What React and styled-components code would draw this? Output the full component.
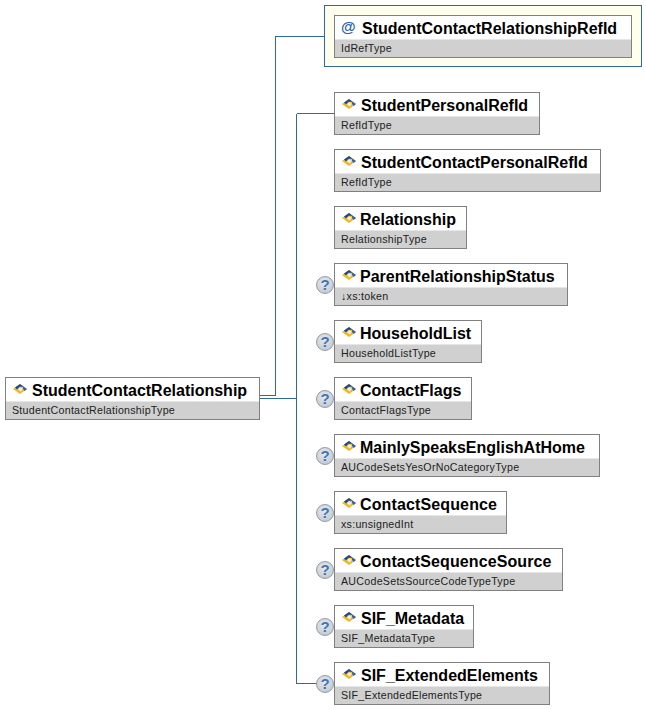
import React from "react";
import styled, { createGlobalStyle } from "styled-components";

const Global = createGlobalStyle`
  html, body { margin: 0; padding: 0; background: #fff; }
  body { font-family: "Liberation Sans", Arial, sans-serif; }
`;

const Diagram = styled.div`
  position: relative;
  width: 646px;
  height: 709px;
  overflow: hidden;
  display: flex;
  align-items: flex-start;
  box-sizing: border-box;
  padding: 5px 0 0 5px;
`;

const Root = styled.div`
  margin-top: 372px;
  width: 319px;
  flex: none;
`;

const Schema = styled.div`
  display: flex;
  flex-direction: column;
  align-items: flex-start;
  gap: 14px;
`;

const AttributeGroup = styled.div`
  box-sizing: border-box;
  width: 318px;
  height: 62px;
  margin-bottom: 11px;
  padding: 9px;
  background: #ffffee;
  border: 1px solid #31699b;
`;

const Elements = styled.div`
  display: flex;
  flex-direction: column;
  align-items: flex-start;
  gap: 14px;
  margin-left: 10px;
`;

const Node = styled.div`
  position: relative;
  box-sizing: border-box;
  height: 43px;
  width: ${(p) => p.$w}px;
  background: #fff;
  border: 1px solid #808080;
  display: flex;
  flex-direction: column;
`;

const Head = styled.div`
  height: 23px;
  flex: none;
  display: flex;
  align-items: center;
  padding: 3px 0 0 7px;
  gap: ${(p) => p.$gap}px;
  box-sizing: border-box;
`;

const Name = styled.span`
  font-size: 16px;
  font-weight: 700;
  color: #000;
  white-space: nowrap;
  line-height: 20px;
  letter-spacing: ${(p) => p.$track || 0}px;
`;

const Type = styled.div`
  flex: 1;
  background: #d0d0d0;
  border-top: 1px solid #e6e6e6;
  font-size: 10.67px;
  letter-spacing: 0.26px;
  line-height: 17px;
  padding-left: 6px;
  color: #222;
  white-space: nowrap;
`;

const At = styled.span`
  font-size: 15px;
  line-height: 20px;
  color: #2b62a8;
  font-weight: 700;
  width: 15px;
  margin: -5px 0 0 -1px;
`;

const Optional = styled.span`
  position: absolute;
  left: -19px;
  top: 12px;
  box-sizing: border-box;
  width: 18px;
  height: 18px;
  border-radius: 50%;
  background: radial-gradient(circle at 45% 35%, #e6e9ee 0%, #c8ced6 70%, #b4bac2 100%);
  border: 1.5px solid #969aa0;
  color: #3f77b4;
  font-size: 15px;
  font-weight: 700;
  line-height: 15px;
  text-align: center;
`;

const Wires = styled.svg`
  position: absolute;
  left: 0;
  top: 0;
  pointer-events: none;
`;

const IconSvg = styled.svg`
  flex: none;
  margin-top: -4px;
`;

const ElementIcon = () => (
  <IconSvg width="14" height="10" viewBox="0 0 14 10">
    <path d="M0 5 L7 0 L14 5 L7 10 Z" fill="#f2b81e" />
    <path d="M2 3.6 L7 0 L10.8 2.7 L6.4 2.8 L4 5.6 Z" fill="#17479a" />
    <path d="M10.3 2.4 L14 5 L11.6 6.9 L9.8 4.6 Z" fill="#2a62b4" />
    <path d="M4.8 5.2 L7.6 3.2 L10 4.8 L7.8 7.6 Z" fill="#e6eef6" />
  </IconSvg>
);

const items = [
  { name: "StudentPersonalRefId", type: "RefIdType", w: 206, gap: 5 },
  { name: "StudentContactPersonalRefId", type: "RefIdType", w: 267, gap: 5 },
  { name: "Relationship", type: "RelationshipType", w: 133 },
  { name: "ParentRelationshipStatus", type: "↓xs:token", w: 234, opt: true },
  { name: "HouseholdList", type: "HouseholdListType", w: 148, opt: true },
  { name: "ContactFlags", type: "ContactFlagsType", w: 138, opt: true },
  { name: "MainlySpeaksEnglishAtHome", type: "AUCodeSetsYesOrNoCategoryType", w: 266, opt: true },
  { name: "ContactSequence", type: "xs:unsignedInt", w: 173, opt: true, track: 0.13 },
  { name: "ContactSequenceSource", type: "AUCodeSetsSourceCodeTypeType", w: 229, opt: true, track: 0.1 },
  { name: "SIF_Metadata", type: "SIF_MetadataType", w: 140, opt: true, gap: 5 },
  { name: "SIF_ExtendedElements", type: "SIF_ExtendedElementsType", w: 216, opt: true, gap: 5 },
];

export default function App() {
  return (
    <>
      <Global />
      <Diagram>
        <Wires width="646" height="709" shapeRendering="crispEdges">
          <path
            d="M260 395.5 H275.5 V36.5 H324 M260 398.5 H296.5 M296.5 113.5 H334 M296.5 113.5 V683.5 H317"
            fill="none"
            stroke="#31699b"
            strokeWidth="1"
          />
        </Wires>
        <Root>
          <Node $w={255}>
            <Head $gap={5}>
              <ElementIcon />
              <Name>StudentContactRelationship</Name>
            </Head>
            <Type>StudentContactRelationshipType</Type>
          </Node>
        </Root>
        <Schema>
          <AttributeGroup>
            <Node $w={298}>
              <Head $gap={6}>
                <At>@</At>
                <Name>StudentContactRelationshipRefId</Name>
              </Head>
              <Type>IdRefType</Type>
            </Node>
          </AttributeGroup>
          <Elements>
            {items.map((it) => (
              <Node key={it.name} $w={it.w}>
                {it.opt && <Optional>?</Optional>}
                <Head $gap={it.gap || 4}>
                  <ElementIcon />
                  <Name $track={it.track}>{it.name}</Name>
                </Head>
                <Type>{it.type}</Type>
              </Node>
            ))}
          </Elements>
        </Schema>
      </Diagram>
    </>
  );
}
